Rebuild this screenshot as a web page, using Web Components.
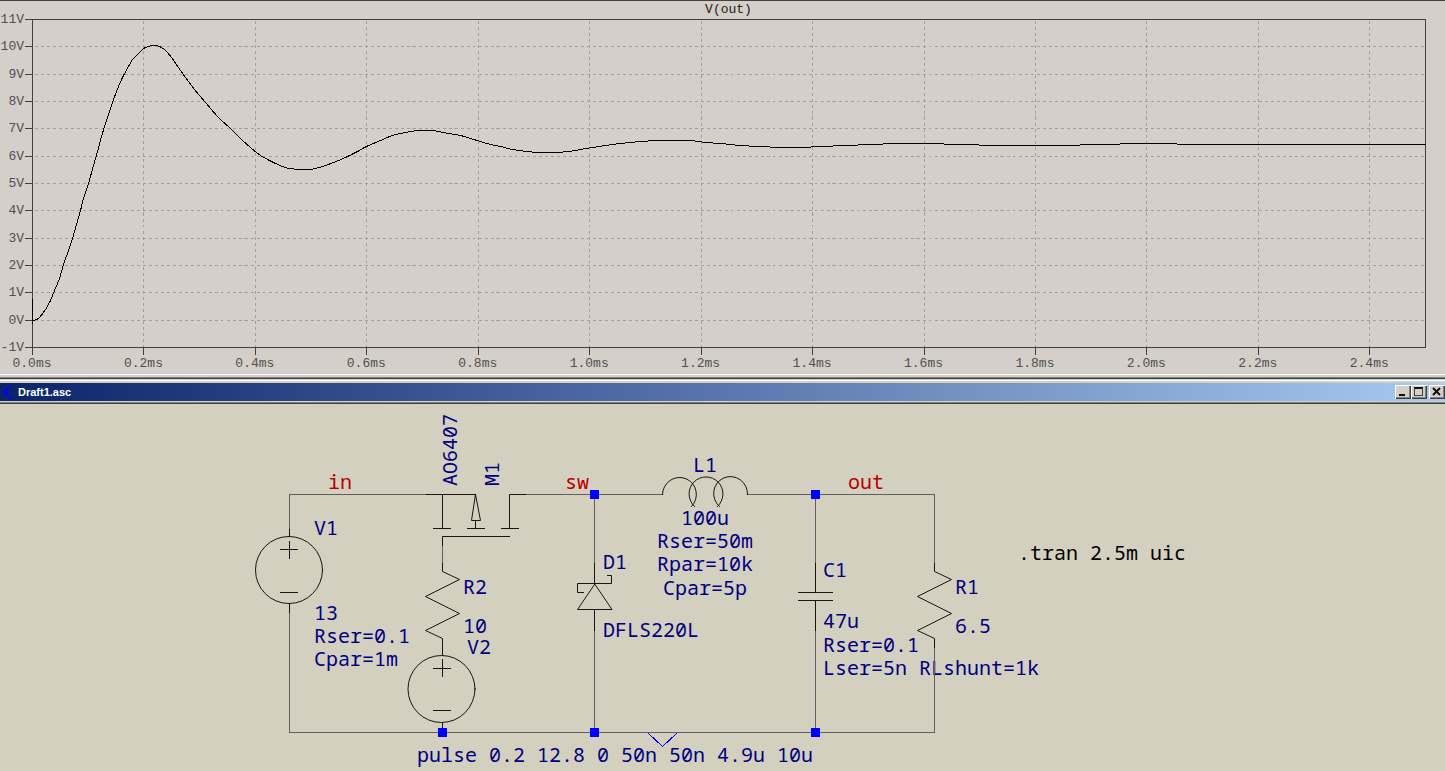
<!DOCTYPE html>
<html lang="en">
<head>
<meta charset="utf-8">
<title>Draft1</title>
<style>
  html, body { height: 100%; }
  body { margin: 0; background: #d4d0c8; overflow: hidden; }
</style>
</head>
<body>
<spice-workspace>
  <waveform-plot slot="plot">V(out)</waveform-plot>
  <window-bar slot="bar">Draft1.asc</window-bar>
  <schematic-sheet slot="sheet"></schematic-sheet>
</spice-workspace>

<template id="workspace-template">
  <style>
    :host { display: flex; flex-direction: column; min-height: 100vh; }
    .edge { height: 1px; background: #404040; }
    .frame { height: 9px; background: linear-gradient(#fff 0 1px, #d4d0c8 1px 3px, #808080 3px 4px, #404040 4px 5px, #d4d0c8 5px 6px, #fff 6px 7px, #d4d0c8 7px 9px); }
    .lip { height: 3px; background: linear-gradient(#d4d0c8 0 1px, #808080 1px 2px, #404040 2px 3px); }
    .sheet { flex: 1; background: #d4d0c0; }
  </style>
  <div class="edge"></div>
  <slot name="plot"></slot>
  <div class="frame"></div>
  <slot name="bar"></slot>
  <div class="lip"></div>
  <div class="sheet"><slot name="sheet"></slot></div>
</template>

<template id="plot-template">
  <style>
    :host {
      display: grid; grid-template-columns: 24px 8px minmax(0, 1fr) 20px; grid-template-rows: 18px 328px 27px;
      background: #d4cfc8; color: #505050; overflow: hidden;
      font: 13px/14px "Liberation Mono", "Courier New", monospace;
    }
    .title { grid-area: 1 / 3; text-align: center; line-height: 18px; color: #202020; }
    .volts { grid-area: 2 / 1; display: flex; flex-direction: column; justify-content: space-between; align-items: flex-end; margin: -6px 0 -8px; }
    svg { grid-area: 2 / 3; display: block; width: 100%; height: 100%; overflow: visible; shape-rendering: crispEdges; fill: none; stroke-width: 1px; }
    svg * { vector-effect: non-scaling-stroke; }
    .grid { stroke: #a0a0a0; stroke-dasharray: 3 3; }
    .axis { stroke: #404040; }
    .trace { stroke: #000; }
    .times { grid-area: 3 / 3; display: flex; width: 104%; margin-left: -4%; padding-top: 10px; }
    .times span { flex: 1; text-align: center; white-space: nowrap; }
  </style>
  <div class="title"><slot></slot></div>
  <div class="volts"></div>
  <svg viewBox="0 0 1393 328" preserveAspectRatio="none" aria-hidden="true">
    <g transform="translate(.5 .5)"><path class="grid"/><path class="axis"/><path class="trace"/></g>
  </svg>
  <div class="times"></div>
</template>

<template id="bar-template">
  <style>
    :host {
      display: flex; align-items: center; height: 18px; color: #fff;
      background: linear-gradient(90deg, #0a246a, #a6caf0);
      font: bold 11px/18px "Liberation Sans", Arial, sans-serif;
    }
    svg { display: block; shape-rendering: crispEdges; fill: none; stroke: #00f; }
    .logo { width: 16px; height: 16px; margin-right: 2px; }
    .name { flex: 1; }
    button {
      width: 16px; height: 14px; padding: 0; border: 0; background: #d4d0c8; border-radius: 0;
      box-shadow: inset 1px 1px #fff, inset -1px -1px #404040, inset -2px -2px #808080;
    }
    button svg { width: 16px; height: 14px; stroke: #101010; }
    .close { margin-left: 2px; }
  </style>
  <svg class="logo" viewBox="0 0 16 16" aria-hidden="true"><path d="M2 7.500H6M5.500 4V12M6.500 4V12M7 5.500L12 1M7 9.500L12 15"/><path d="M12 11V15H8Z" fill="#00f" stroke="none"/></svg>
  <span class="name"><slot></slot></span>
  <button aria-label="Minimize"><svg viewBox="0 0 16 14"><path d="M4 10H10" stroke-width="2"/></svg></button>
  <button aria-label="Maximize"><svg viewBox="0 0 16 14"><path d="M3 3H12" stroke-width="2"/><path d="M3.500 3V10.500H11.500V3" stroke="#404050"/></svg></button>
  <button class="close" aria-label="Close"><svg viewBox="0 0 16 14"><path d="M4 3L11 10M11 3L4 10" stroke-width="2" shape-rendering="auto"/></svg></button>
</template>

<template id="sheet-template">
  <style>
    :host { display: block; }
    svg { display: block; width: 100%; height: auto; font: 20px "Noto Sans Mono", "Noto Mono", "DejaVu Sans Mono", monospace; white-space: pre; }
    .draw { shape-rendering: crispEdges; fill: none; stroke-width: 1px; stroke-linecap: square; }
    .wire { stroke: #606060; }
    .part { stroke: #000; stroke-width: .9px; }
    .ground { stroke: #00f; }
    .joint { fill: #00f; shape-rendering: crispEdges; }
    .label { fill: #000080; }
    .net { fill: #b80000; }
    .mid { text-anchor: middle; }
  </style>
  <svg viewBox="0 404 1445 367">
    <g class="label">
      <text transform="translate(457 486) rotate(-90)">AO6407</text>
      <text transform="translate(499 486) rotate(-90)">M1</text>
      <text x="314" y="535">V1</text>
      <text x="314" y="620">13</text>
      <text x="314" y="643">Rser=0.1</text>
      <text x="314" y="666">Cpar=1m</text>
      <text x="463" y="594">R2</text>
      <text x="463" y="633">10</text>
      <text x="467" y="654">V2</text>
      <text x="603" y="569">D1</text>
      <text x="603" y="637">DFLS220L</text>
      <g class="mid">
        <text x="705" y="472">L1</text>
        <text x="705" y="525">100u</text>
        <text x="705" y="548">Rser=50m</text>
        <text x="705" y="571">Rpar=10k</text>
        <text x="705" y="595">Cpar=5p</text>
      </g>
      <text x="823" y="577">C1</text>
      <text x="823" y="628">47u</text>
      <text x="823" y="652">Rser=0.1</text>
      <text x="823" y="675">Lser=5n RLshunt=1k</text>
      <text x="955" y="594">R1</text>
      <text x="955" y="633">6.5</text>
      <text x="417" y="762">pulse 0.2 12.8 0 50n 50n 4.9u 10u</text>
    </g>
    <g class="net">
      <text x="328" y="489">in</text>
      <text x="565" y="489">sw</text>
      <text x="848" y="489">out</text>
    </g>
    <text x="1018" y="560">.tran 2.5m uic</text>
    <g class="draw" transform="translate(.5 .5)">
      <path class="wire" d="M426 494H289V529M289 612V732H934V647M442 545V563M525 494H662M747 494H934V563M594 494V563M594 630V732M815 494V563M815 630V732"/>
      <g class="part">
        <path d="M289 529V536M289 603V612M280 549H297M289 541V558M280 592H297"/>
        <circle cx="288.500" cy="569.500" r="33.500"/>
        <path d="M426 494H475M442 494V528M433 528H450M467 528H484M475 521V528M475 494L471 520H480L475 494M501 528H518M509 528V494H525M509 536H442V545"/>
        <path d="M442 563V571L459 579L425 596L459 613L425 630L442 638V655M433 668H450M442 659V676M433 710H450M442 722V732"/>
        <circle cx="441" cy="688.500" r="33.500"/>
        <path d="M594 563V583M583 592H577V583H611V575H607M594 584L577 609H611ZM594 609V630"/>
        <path d="M662 494A17 17 0 1 1 691 506M694 506A17 17 0 1 1 717 506M719 506A17 17 0 1 1 747 494"/>
        <path d="M815 563V592M798 592H832M798 600H832M815 600V630"/>
        <path d="M934 563V571L951 579L917 596L951 613L917 630L934 638V647"/>
      </g>
      <path class="ground" d="M648 733L662 746L676 733"/>
    </g>
    <path class="joint" d="M590 490h9v9h-9zM811 490h9v9h-9zM438 728h9v9h-9zM590 728h9v9h-9zM811 728h9v9h-9z"/>
  </svg>
</template>

<script>
  const attach = (host, id) => {
    const root = host.attachShadow({ mode: "open" });
    root.append(document.getElementById(id).content.cloneNode(true));
    return root;
  };

  class SpiceWorkspace extends HTMLElement {
    constructor() { super(); attach(this, "workspace-template"); }
  }

  // Samples of V(out): x in plot units from t = 0, y downwards from 11 V.
  const SAMPLES = [[1,301],[4,300],[7,298],[13,290],[18,281],[22,271],[27,259],[31,245],[36,231],[40,219],[44,205],[48,191],[51,179],[56,164],[61,146],[65,132],[69,117],[73,104],[78,89],[84,72],[90,58],[96,47],[100,40],[106,34],[111,29],[116,27],[120,26],[124,26],[129,28],[133,31],[139,38],[146,48],[153,58],[162,70],[173,83],[186,98],[198,109],[208,119],[218,128],[228,136],[241,143],[250,147],[257,149],[268,150],[278,150],[290,147],[301,143],[313,138],[325,132],[334,127],[348,121],[360,116],[373,113],[386,111],[400,111],[416,114],[428,116],[438,119],[448,122],[458,125],[468,127],[480,130],[494,132],[508,133],[523,133],[536,132],[548,130],[560,128],[573,126],[588,124],[608,122],[628,121],[643,121],[658,121],[673,123],[688,124],[708,126],[728,127],[748,128],[768,128],[788,127],[813,126],[838,125],[868,124],[893,124],[928,125],[968,126],[998,126],[1028,126],[1068,125],[1118,124],[1168,125],[1228,125],[1268,125],[1393,125]];

  // Catmull-Rom spline through the samples, written as cubic segments.
  const spline = (p) => {
    let d = `M${p[0]}`;
    for (let i = 0; i < p.length - 1; i++) {
      const a = p[i - 1] || p[i], b = p[i], c = p[i + 1], e = p[i + 2] || c;
      d += `C${b[0] + (c[0] - a[0]) / 6} ${b[1] + (c[1] - a[1]) / 6} ${c[0] - (e[0] - b[0]) / 6} ${c[1] - (e[1] - b[1]) / 6} ${c}`;
    }
    return d;
  };

  class WaveformPlot extends HTMLElement {
    constructor() {
      super();
      const root = attach(this, "plot-template");
      const add = (parent, text) => {
        const s = document.createElement("span");
        s.textContent = text;
        root.querySelector(parent).append(s);
      };
      let grid = "", axis = "M0 0H1393V328H0Z";
      for (let v = 11; v >= -1; v--) {
        add(".volts", v + "V");
        const y = Math.round((11 - v) * 328 / 12);
        axis += `M-8 ${y}H0`;
        if (v < 11 && v > -1) grid += `M2 ${y}H1393`;
      }
      for (let i = 0; i <= 12; i++) {
        add(".times", (i / 5).toFixed(1) + "ms");
        const x = Math.round(i * 1393 * 0.08);
        axis += `M${x} 328V335`;
        if (i) grid += `M${x} 1V328`;
      }
      root.querySelector(".grid").setAttribute("d", grid);
      root.querySelector(".axis").setAttribute("d", axis);
      root.querySelector(".trace").setAttribute("d", "M0 279V304M0 301H1" + spline(SAMPLES));
    }
  }

  class WindowBar extends HTMLElement {
    constructor() { super(); attach(this, "bar-template"); }
  }

  class SchematicSheet extends HTMLElement {
    constructor() { super(); attach(this, "sheet-template"); }
  }

  customElements.define("spice-workspace", SpiceWorkspace);
  customElements.define("waveform-plot", WaveformPlot);
  customElements.define("window-bar", WindowBar);
  customElements.define("schematic-sheet", SchematicSheet);
</script>
</body>
</html>
